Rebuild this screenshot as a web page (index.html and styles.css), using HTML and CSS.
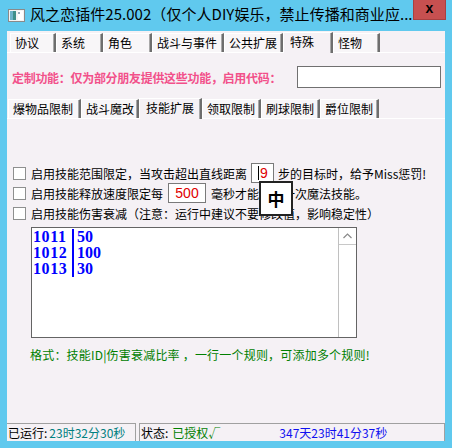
FILE: index.html
```html
<!DOCTYPE html>
<html lang="zh">
<head>
<meta charset="utf-8">
<link rel="stylesheet" href="styles.css">
</head>
<body>
<div class="window">
  <div class="titlebar">
    <svg class="appicon" width="17" height="13" viewBox="0 0 17 13">
      <rect x="0.5" y="0.5" width="16" height="12" fill="#f4f4f4" stroke="#8a8a8a"/>
      <rect x="2" y="2" width="6" height="9" fill="#3f8f8a"/>
      <rect x="2" y="2" width="3" height="9" fill="#6db3c9"/>
      <rect x="10" y="2" width="5" height="9" fill="#ffffff"/>
      <rect x="10" y="3" width="2" height="2" fill="#9ab"/>
    </svg>
    <span class="title">风之恋插件25.002（仅个人DIY娱乐，禁止传播和商业应...</span>
    <div class="close">x</div>
  </div>
  <div class="client">
    <div class="tabs outer">
      <div class="tab t46">协议</div>
      <div class="tab t47">系统</div>
      <div class="tab t49">角色</div>
      <div class="tab t72">战斗与事件</div>
      <div class="tab t59">公共扩展</div>
      <div class="tab t50 sel">特殊</div>
      <div class="tab t47">怪物</div>
    </div>
    <div class="panel">
      <div class="coderow">
        <span class="pink">定制功能：仅为部分朋友提供这些功能，启用代码：</span>
        <div class="codebox"></div>
      </div>
      <div class="tabs inner">
        <div class="tab t73">爆物品限制</div>
        <div class="tab t58">战斗魔改</div>
        <div class="tab t63 sel">技能扩展</div>
        <div class="tab t59">领取限制</div>
        <div class="tab t59">刷球限制</div>
        <div class="tab t59">爵位限制</div>
      </div>
      <div class="subpanel">
        <div class="row">
          <span class="cb"></span>
          <span>启用技能范围限定，当攻击超出直线距离</span>
          <span class="field f23"><span class="caret"></span>9</span>
          <span>步的目标时，给予Miss惩罚!</span>
        </div>
        <div class="row">
          <span class="cb"></span>
          <span>启用技能释放速度限定每</span>
          <span class="field f38 center">500</span>
          <span>毫秒才能释放一次魔法技能。</span>
        </div>
        <div class="row">
          <span class="cb"></span>
          <span>启用技能伤害衰减（注意：运行中建议不要修改值，影响稳定性）</span>
        </div>
        <div class="memo">
          <div class="lines">
            <div class="ln"><span class="k">1011</span><span class="bar"></span><span>50</span></div>
            <div class="ln"><span class="k">1012</span><span class="bar"></span><span>100</span></div>
            <div class="ln"><span class="k">1013</span><span class="bar"></span><span>30</span></div>
          </div>
          <div class="vscroll">
            <div class="sbtn up">
              <svg width="9" height="6" viewBox="0 0 9 6"><path d="M0.5 5 L4.5 1 L8.5 5" fill="none" stroke="#8a8a8a" stroke-width="1.2"/></svg>
            </div>
            <div class="track"></div>
          </div>
        </div>
        <div class="hint">格式：技能ID|伤害衰减比率 ，一行一个规则，可添加多个规则!</div>
      </div>
    </div>
    <div class="status">
      <div class="sp sp1"><span>已运行:</span><span class="teal">23时32分30秒</span></div>
      <div class="sp sp2"><span>状态:</span><span class="green">已授权√</span><span class="blue">347天23时41分37秒</span></div>
    </div>
  </div>
  <div class="ime">中</div>
</div>
</body>
</html>
```
FILE: styles.css
```css
html, body {
  margin: 0;
  padding: 0;
}
body {
  width: 452px;
  height: 448px;
  overflow: hidden;
  font-family: "Noto Sans CJK SC", "Liberation Sans", sans-serif;
  font-size: 12px;
  color: #000;
}
.window {
  position: relative;
  width: 452px;
  height: 448px;
  background: #60c9ee;
  display: flex;
  flex-direction: column;
}
.titlebar {
  height: 31px;
  display: flex;
  align-items: flex-start;
  position: relative;
}
.appicon {
  margin: 9px 0 0 8px;
  flex: none;
}
.title {
  margin: 3px 0 0 5px;
  font-size: 15px;
  line-height: 22px;
  white-space: nowrap;
  color: #000;
  letter-spacing: 0.05px;
}
.close {
  position: absolute;
  left: 413px;
  top: 0;
  width: 33px;
  height: 20px;
  box-sizing: border-box;
  background: #c75050;
  border: 1px solid #a94040;
  border-top: none;
  font-family: "Liberation Sans", sans-serif;
  font-weight: bold;
  font-size: 14px;
  line-height: 17px;
  text-align: center;
  color: #000;
}
.client {
  flex: 1;
  margin: 0 7px 7px 7px;
  background: #f5f1f5;
  display: flex;
  flex-direction: column;
}
.tabs {
  display: flex;
  align-items: flex-end;
  position: relative;
  z-index: 1;
}
.tabs.outer {
  height: 21px;
  padding-left: 3px;
}
.tabs.inner {
  height: 21px;
  padding-left: 1px;
  margin-top: 9px;
}
.tab {
  height: 19px;
  box-sizing: border-box;
  background: #f8f6f8;
  border-top: 1px solid #ffffff;
  border-left: 1px solid #ffffff;
  border-right: 2px solid #6e6e6e;
  box-shadow: inset -1px 0 0 #a8a8a8;
  padding-left: 4px;
  line-height: 17px;
  white-space: nowrap;
}
.tab.sel {
  height: 21px;
  margin-bottom: -1px;
  background: #f5f1f5;
  border-right: 2px solid #6e6e6e;
  padding-left: 6px;
  line-height: 18px;
}
.t46 { width: 46px; }
.t47 { width: 47px; }
.t49 { width: 49px; }
.t50 { width: 50px; }
.t58 { width: 58px; }
.t59 { width: 59px; }
.t63 { width: 63px; }
.t72 { width: 72px; }
.t73 { width: 73px; }
.panel {
  border-top: 1px solid #ffffff;
  display: flex;
  flex-direction: column;
}
.coderow {
  margin-top: 13px;
  height: 22px;
  display: flex;
  align-items: center;
  padding-left: 5px;
}
.pink {
  color: #f2508a;
  font-weight: bold;
  width: 285px;
  white-space: nowrap;
  letter-spacing: -0.3px;
}
.codebox {
  width: 144px;
  height: 22px;
  box-sizing: border-box;
  background: #fff;
  border: 1px solid #707070;
}
.subpanel {
  border-top: 1px solid #ffffff;
  display: flex;
  flex-direction: column;
  padding-top: 44px;
  padding-left: 6px;
}
.row {
  height: 20px;
  display: flex;
  align-items: center;
  white-space: nowrap;
}
.cb {
  width: 13px;
  height: 13px;
  box-sizing: border-box;
  border: 1px solid #8e8f8f;
  background: #fff;
  margin-right: 5px;
  flex: none;
}
.field {
  height: 20px;
  box-sizing: border-box;
  border: 1px solid #7a7a7a;
  background: #fff;
  color: #e00000;
  font-size: 14px;
  line-height: 18px;
  display: flex;
  align-items: center;
  margin: 0 4px;
  font-family: "Liberation Sans", sans-serif;
}
.f23 { width: 23px; padding-left: 6px; }
.f38 { width: 38px; justify-content: center; margin-left: 5px; margin-right: 5px; }
.caret {
  width: 1px;
  height: 14px;
  background: #000;
  margin-right: 1px;
}
.memo {
  margin-top: 4px;
  margin-left: 18px;
  width: 326px;
  height: 111px;
  box-sizing: border-box;
  background: #fff;
  border: 1px solid #646464;
  display: flex;
}
.lines {
  flex: 1;
  padding: 1px 0 0 1px;
  color: #0000ff;
  font-family: "Liberation Serif", serif;
  font-weight: bold;
  font-size: 16px;
}
.ln {
  height: 16px;
  line-height: 16px;
  display: flex;
  align-items: center;
}
.k {
  width: 39px;
  letter-spacing: 0.6px;
}
.bar {
  width: 2px;
  height: 16px;
  background: #0000ff;
  margin-right: 3px;
}
.vscroll {
  width: 17px;
  display: flex;
  flex-direction: column;
  border-left: 1px solid #c0c0c0;
}
.sbtn {
  height: 16px;
  border-bottom: 1px solid #c8c8c8;
  display: flex;
  align-items: center;
  justify-content: center;
  background: #fff;
}
.track {
  flex: 1;
  background: #fff;
}
.hint {
  margin-top: 9px;
  padding-left: 17px;
  color: #008000;
  line-height: 16px;
  white-space: nowrap;
  letter-spacing: 0.2px;
}
.status {
  margin-top: auto;
  height: 18px;
  display: flex;
  gap: 3px;
}
.sp {
  box-sizing: border-box;
  border-top: 1px solid #a0a0a0;
  border-left: 1px solid #a0a0a0;
  border-right: 1px solid #a0a0a0;
  display: flex;
  align-items: center;
  white-space: nowrap;
  line-height: 16px;
}
.sp1 {
  width: 129px;
  border-left: none;
  padding-left: 1px;
}
.sp2 {
  flex: 1;
  padding-left: 1px;
}
.teal { color: #008080; margin-left: 2px; }
.green { color: #008000; margin-left: 4px; width: 107px; }
.blue { color: #1010f0; }
.ime {
  position: absolute;
  left: 259px;
  top: 181px;
  width: 34px;
  height: 35px;
  box-sizing: border-box;
  border: 2px solid #222;
  background: #fff;
  font-size: 17px;
  font-weight: bold;
  display: flex;
  align-items: center;
  justify-content: center;
}
```
